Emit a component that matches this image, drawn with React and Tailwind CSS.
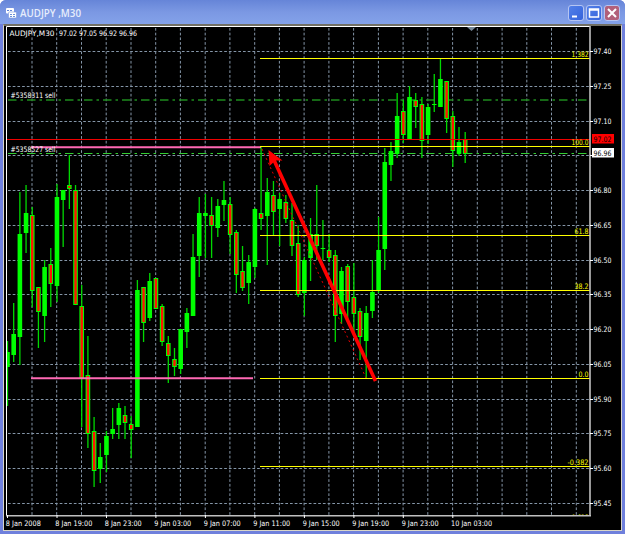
import React from 'react'

// [high, body top, body bottom, low, color] for every half hour bar
const candles = [
  [341, 352, 367, 406, 'g'], [303, 334, 355, 362, 'g'], [192, 234, 337, 365, 'g'], [185, 213, 233, 253, 'g'],
  [207, 215, 291, 307, 'r'], [287, 287, 312, 348, 'r'], [260, 267, 316, 342, 'g'], [248, 264, 284, 307, 'r'],
  [184, 197, 286, 302, 'g'], [190, 190, 200, 247, 'g'], [155, 185, 189, 209, 'r'], [185, 190, 305, 305, 'r'],
  [285, 306, 378, 427, 'r'], [336, 375, 434, 448, 'r'], [417, 431, 471, 487, 'r'], [443, 457, 469, 483, 'g'],
  [431, 436, 455, 472, 'g'], [408, 429, 434, 439, 'g'], [403, 408, 425, 439, 'g'], [406, 415, 423, 439, 'r'],
  [416, 424, 430, 458, 'r'], [280, 290, 427, 427, 'g'], [287, 287, 323, 342, 'r'], [273, 281, 318, 321, 'g'],
  [278, 278, 309, 309, 'r'], [304, 306, 342, 346, 'r'], [336, 343, 356, 383, 'r'], [348, 359, 367, 376, 'r'],
  [329, 329, 369, 374, 'g'], [308, 313, 332, 348, 'g'], [234, 257, 316, 316, 'g'], [197, 213, 256, 277, 'g'],
  [194, 213, 216, 258, 'g'], [197, 215, 226, 258, 'r'], [199, 206, 228, 237, 'g'], [181, 200, 205, 221, 'g'],
  [197, 204, 235, 254, 'r'], [230, 232, 275, 293, 'r'], [246, 271, 288, 291, 'r'], [255, 262, 283, 304, 'g'],
  [208, 209, 267, 278, 'g'], [146, 213, 219, 230, 'r'], [178, 192, 216, 265, 'g'], [181, 195, 212, 235, 'r'],
  [193, 199, 209, 246, 'g'], [195, 202, 219, 223, 'r'], [203, 220, 246, 256, 'r'], [225, 243, 295, 297, 'r'],
  [257, 260, 293, 316, 'g'], [218, 234, 258, 281, 'g'], [185, 234, 246, 260, 'r'], [220, 248, 249, 260, 'g'],
  [234, 250, 258, 262, 'r'], [250, 255, 316, 342, 'r'], [267, 271, 314, 324, 'g'], [264, 266, 302, 321, 'r'],
  [263, 297, 314, 333, 'r'], [308, 311, 337, 360, 'r'], [306, 313, 341, 378, 'g'], [260, 292, 311, 318, 'g'],
  [217, 250, 290, 293, 'g'], [148, 162, 249, 270, 'g'], [142, 151, 165, 181, 'g'], [93, 116, 154, 158, 'g'],
  [100, 111, 135, 143, 'r'], [86, 97, 140, 140, 'g'], [93, 100, 107, 128, 'r'], [97, 104, 141, 158, 'r'],
  [104, 107, 135, 144, 'g'], [74, 104, 105, 112, 'g'], [58, 79, 107, 107, 'g'], [81, 81, 119, 133, 'r'],
  [111, 116, 151, 167, 'r'], [127, 142, 154, 156, 'g'], [132, 139, 154, 163, 'r'],
]

const prices = ['97.40', '97.25', '97.10', '', '96.80', '96.65', '96.50', '96.35', '96.20', '96.05', '95.90', '95.75', '95.60', '95.45']
const times = ['8 Jan 2008', '8 Jan 19:00', '8 Jan 23:00', '9 Jan 03:00', '9 Jan 07:00', '9 Jan 11:00', '9 Jan 15:00', '9 Jan 19:00', '9 Jan 23:00', '10 Jan 03:00']
const fibs = [[58.5, '1.382', 17], [146.5, '100.0', 17], [235.5, '61.8', 14], [290.5, '38.2', 14], [378.5, '0.0', 10], [466.5, '-0.382', 21]]

const font = '[font-family:"DejaVu_Sans_Condensed","DejaVu_Sans",sans-serif] text-[7.5px]'

function Label({ x, y, w, fill = '#fff', end, children }){
  return <text x={end ? x - w : x} y={y} fill={fill} textLength={w} lengthAdjust="spacingAndGlyphs">{children}</text>
}

function Candle({ i, bar }){
  const [high, top, bottom, low, color] = bar
  const x = 7.5 + i * 6.185
  return (
    <g>
      <rect x={x - 0.65} y={high} width="1.3" height={low - high} fill="#00d800"/>
      <rect x={x - 2.3} y={top} width="4.6" height={bottom - top} fill="#00ff00"/>
      {color === 'r' && <rect x={x - 1.2} y={top + 1} width="2.4" height={bottom - top - 2} fill="#ff1400"/>}
    </g>
  )
}

function Chart(){
  return (
    <svg className={`block ${font}`} width="616" height="504" viewBox="4 26 616 504">
      <g stroke="#8596a8" strokeWidth="1" strokeDasharray="2.7 2">
        {prices.map((p, i)=> <path key={i} d={`M8 ${Math.round(51 + i * 34.77) + 0.5}H590`}/>)}
        {Array.from({length: 23}).map((_, i)=> <path key={i} d={`M${(32 + i * 24.74).toFixed(1)} 28V515`}/>)}
      </g>
      <g strokeDasharray="8.500 4 2.500 4">
        <path d="M8 100H590" stroke="#1e8a1e" strokeWidth="1.5"/>
        <path d="M8 153.5H590" stroke="#32cd32"/>
      </g>
      <svg x="7" y="27" width="583" height="488" viewBox="7 27 583 488">
        {candles.map((c, i)=> <Candle key={i} i={i} bar={c}/>)}
      </svg>
      <path d="M7 139.5H590" stroke="#f00000"/>
      <path d="M31 147.2H261M31 378.2H253" stroke="#ff69b4" strokeWidth="2"/>
      {fibs.map(([y, t, w])=> (
        <g key={t}>
          <path d={`M260 ${y}H590`} stroke="#ffff00"/>
          <Label x={588.5} y={y - 2} w={w} fill="#ffff00" end>{t}</Label>
        </g>
      ))}
      <svg x="565" y="513" width="25" height="2.5" viewBox="565 513 25 2.5">
        <Label x={588.5} y={519.5} w={17} fill="#ffff00" end>0.618</Label>
      </svg>
      <path d="M262 149L366 378" stroke="#e00000" strokeDasharray="2 3"/>
      <path d="M375.5 381L273.500 159" stroke="#ff0000" strokeWidth="3.6"/>
      <path d="M268.5 150L282.500 160.500L275.5 160.500L269.5 166Z" fill="#ff0000"/>
      <path d="M467 27h9l-4.500 4z" fill="#778899"/>

      <path d="M6.500 516V26.500H590" stroke="#fff" fill="none"/>
      <path d="M590 26V516M6 515.7H591" stroke="#c0c0c0" strokeWidth="1.6"/>
      {prices.map((p, i)=> {
        const y = Math.round(51 + i * 34.77) + 0.5
        return (
          <g key={i}>
            <path d={`M590 ${y}h3`} stroke="#fff"/>
            {p && <Label x={593.6} y={y + 2.500} w={17.8}>{p}</Label>}
          </g>
        )
      })}
      {times.map((t, i)=> (
        <g key={t}>
          <path d={`M${(7.500 + i * 49.48).toFixed(1)} 515v3`} stroke="#fff"/>
          <Label x={5.800 + i * 49.48} y={526} w={i === 0 ? 35 : i === 9 ? 41 : 37}>{t}</Label>
        </g>
      ))}
      <rect x="592" y="134" width="22" height="9.500" fill="#ff0000"/>
      <Label x={593.6} y={142} w={17.8} fill="#000">97.02</Label>
      <rect x="592" y="148" width="22" height="9.500" fill="#fff"/>
      <Label x={593.6} y={156} w={17.8} fill="#000">96.96</Label>
      <Label x={9.5} y={36} w={45}>AUDJPY,M30</Label>
      <Label x={59} y={36} w={78}>97.02 97.05 96.92 96.96</Label>
      <Label x={10.5} y={98} w={45}>#5358311 sell</Label>
      <Label x={10.5} y={152} w={45}>#5358527 sell</Label>
    </svg>
  )
}

function WinButton({ close, children }){
  return (
    <button className={`flex h-[16px] w-[16px] items-center justify-center rounded-[3px] border border-[#b5c5f3] ${close ? 'bg-[#b1607a]' : 'bg-linear-to-br from-[#5380e8] to-[#3563dc]'}`}>
      <svg width="14" height="14" viewBox="0 0 14 14" fill="none" stroke="#fff">{children}</svg>
    </button>
  )
}

export default function App(){
  return (
    <div className="flex h-[534px] w-[625px] flex-col overflow-hidden rounded-t-[6px] bg-[#6f80dc] px-[3px] pb-[3px]">
      <div className="-mx-[3px] flex h-[24px] shrink-0 items-center bg-linear-to-b from-[#6685d8] via-[#7b98e3] to-[#84a2ea] pt-[2px] pr-[5px] pl-[6px]">
        <svg width="11" height="11" viewBox="0 0 11 11">
          <rect x="0" y="0" width="8" height="5.500" rx="1" fill="#fff"/>
          <path d="M1 2.500h2M4 2.500h2" stroke="#5f83d8"/>
          <rect x="2.500" y="4" width="8" height="6" rx="1" fill="#fff" stroke="#7793de" strokeWidth=".6"/>
          <path d="M4 6.500h2M7 6.500h2M4 8.500h2M7 8.500h2" stroke="#4773cf" strokeWidth=".8"/>
        </svg>
        <div className="ml-[3px] flex-1">
          <svg className="block [font-family:'Open_Sans',sans-serif] text-[11.5px] font-semibold" width="80" height="16">
            <text x="0" y="12" fill="#e6edfc" textLength="61" lengthAdjust="spacingAndGlyphs">AUDJPY ,M30</text>
          </svg>
        </div>
        <div className="flex gap-[2px]">
          <WinButton><path d="M3 10.500h5" strokeWidth="2"/></WinButton>
          <WinButton><path d="M2.500 3h9v8h-9zM2.500 4h9" strokeWidth="1.500"/></WinButton>
          <WinButton close><path d="M3 3l8 8M11 3l-8 8" strokeWidth="2"/></WinButton>
        </div>
      </div>
      <div className="min-h-0 flex-1 border border-t-2 border-[#d8d5c8] border-t-[#716f64] bg-black">
        <Chart/>
      </div>
    </div>
  )
}
